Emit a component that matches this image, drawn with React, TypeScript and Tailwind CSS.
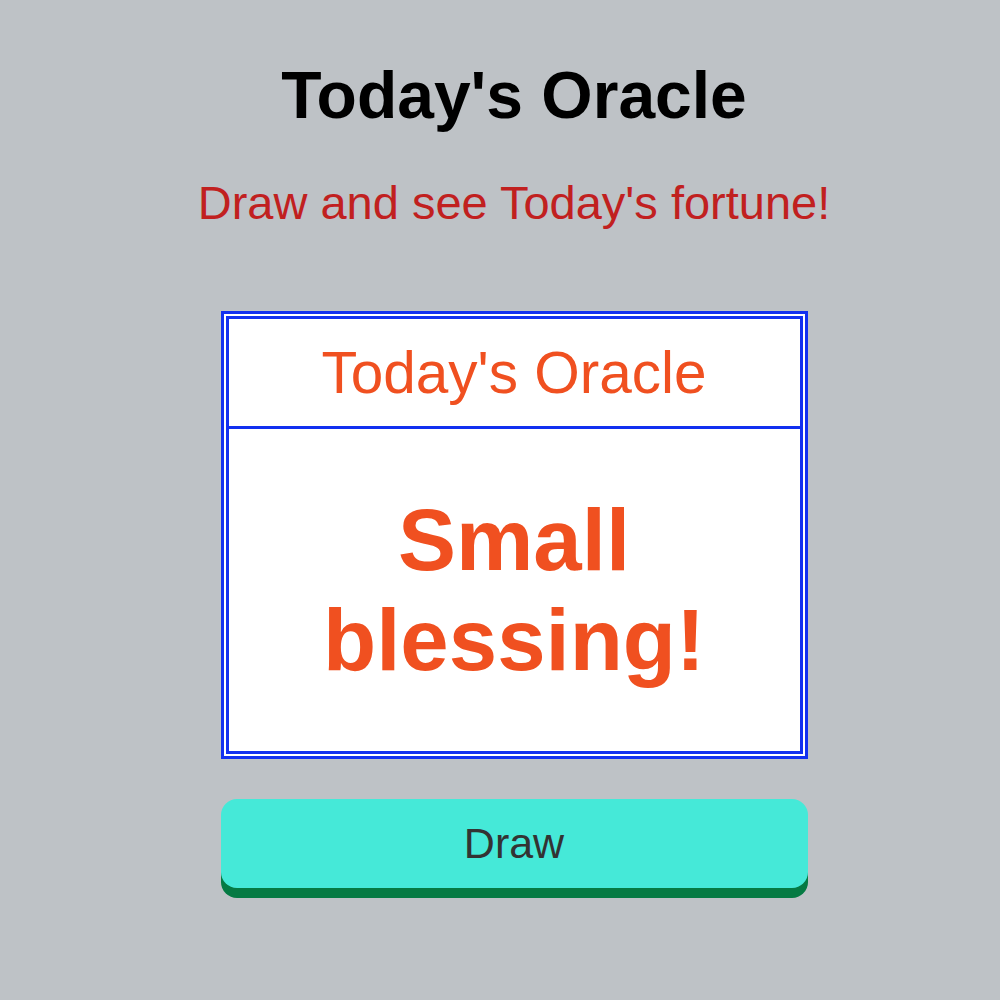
import React from 'react';

export default function App() {
  return (
    <div className="min-h-[1000px] w-full bg-[#bec2c6] pl-[28px] font-['Liberation_Sans',Arial,sans-serif]">
      <div className="flex flex-col items-center pt-[58px]">
        <h1 className="text-[66px] font-bold leading-[74px] text-black">Today's Oracle</h1>
        <p className="mt-[44px] text-[47px] leading-[54px] text-[#c1201f]">Draw and see Today's fortune!</p>

        <div className="mt-[81px] w-[587px] border-[8px] border-double border-[#1230f0] bg-white">
          <div className="flex h-[110px] items-center justify-center border-b-[3px] border-[#1230f0] text-[58.5px] text-[#f05020]">
            Today's Oracle
          </div>
          <div className="flex h-[322px] items-center justify-center text-center text-[87px] font-bold leading-[100px] text-[#f05020]">
            Small<br />blessing!
          </div>
        </div>

        <button className="mt-[40px] h-[89px] w-[587px] rounded-[16px] bg-[#45e9d8] text-[43px] text-[#333] shadow-[0_10px_0_#057a43]">
          Draw
        </button>
      </div>
    </div>
  );
}
